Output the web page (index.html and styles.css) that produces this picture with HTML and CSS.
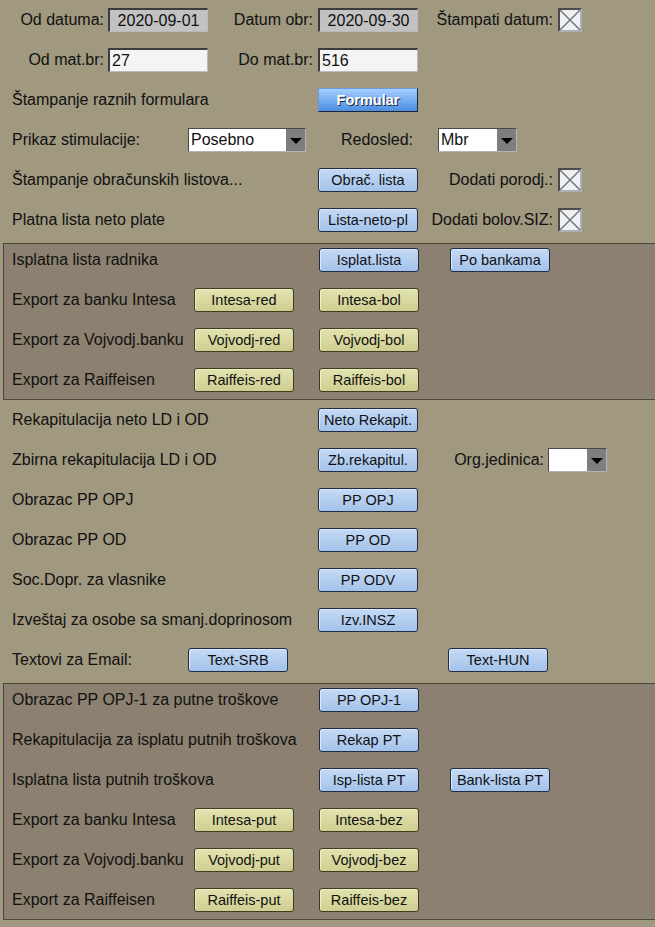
FILE: index.html
```html
<!DOCTYPE html>
<html lang="sr">
<head>
<meta charset="utf-8">
<title>Obračun</title>
<link rel="stylesheet" href="styles.css">
</head>
<body>
<div class="page">
  <div class="row">
    <span class="lbl ra w108">Od datuma:</span>
    <span class="field grey center">2020-09-01</span>
    <span class="lbl ra w110">Datum obr:</span>
    <span class="field grey center">2020-09-30</span>
    <span class="lbl ra w140">Štampati datum:</span>
    <span class="chk"><svg viewBox="0 0 20 20" width="20" height="20"><line x1="0" y1="0" x2="20" y2="20"/><line x1="20" y1="0" x2="0" y2="20"/></svg></span>
  </div>
  <div class="row">
    <span class="lbl ra w108">Od mat.br:</span>
    <span class="field white">27</span>
    <span class="lbl ra w110">Do mat.br:</span>
    <span class="field white">516</span>
  </div>
  <div class="row">
    <span class="lbl w318">Štampanje raznih formulara</span>
    <span class="btn primary">Formular</span>
  </div>
  <div class="row">
    <span class="lbl w188">Prikaz stimulacije:</span>
    <span class="select w118"><span class="val">Posebno</span><span class="arr"></span></span>
    <span class="lbl w132 pl35">Redosled:</span>
    <span class="select w79"><span class="val">Mbr</span><span class="arr"></span></span>
  </div>
  <div class="row">
    <span class="lbl w318">Štampanje obračunskih listova...</span>
    <span class="btn blue">Obrač. lista</span>
    <span class="lbl ra w140">Dodati porodj.:</span>
    <span class="chk"><svg viewBox="0 0 20 20" width="20" height="20"><line x1="0" y1="0" x2="20" y2="20"/><line x1="20" y1="0" x2="0" y2="20"/></svg></span>
  </div>
  <div class="row">
    <span class="lbl w318">Platna lista neto plate</span>
    <span class="btn blue">Lista-neto-pl</span>
    <span class="lbl ra w140">Dodati bolov.SIZ:</span>
    <span class="chk"><svg viewBox="0 0 20 20" width="20" height="20"><line x1="0" y1="0" x2="20" y2="20"/><line x1="20" y1="0" x2="0" y2="20"/></svg></span>
  </div>

  <div class="section">
    <div class="rows">
      <div class="row">
        <span class="lbl s w315">Isplatna lista radnika</span>
        <span class="btn blue">Isplat.lista</span>
        <span class="gap31"></span>
        <span class="btn blue">Po bankama</span>
      </div>
      <div class="row">
        <span class="lbl s w190">Export za banku Intesa</span>
        <span class="btn yellow">Intesa-red</span>
        <span class="gap25"></span>
        <span class="btn yellow">Intesa-bol</span>
      </div>
      <div class="row">
        <span class="lbl s w190">Export za Vojvodj.banku</span>
        <span class="btn yellow">Vojvodj-red</span>
        <span class="gap25"></span>
        <span class="btn yellow">Vojvodj-bol</span>
      </div>
      <div class="row">
        <span class="lbl s w190">Export za Raiffeisen</span>
        <span class="btn yellow">Raiffeis-red</span>
        <span class="gap25"></span>
        <span class="btn yellow">Raiffeis-bol</span>
      </div>
    </div>
  </div>

  <div class="row">
    <span class="lbl w318">Rekapitulacija neto LD i OD</span>
    <span class="btn blue">Neto Rekapit.</span>
  </div>
  <div class="row">
    <span class="lbl w318">Zbirna rekapitulacija LD i OD</span>
    <span class="btn blue">Zb.rekapitul.</span>
    <span class="lbl ra w130">Org.jedinica:</span>
    <span class="select w59"><span class="val"></span><span class="arr"></span></span>
  </div>
  <div class="row">
    <span class="lbl w318">Obrazac PP OPJ</span>
    <span class="btn blue">PP OPJ</span>
  </div>
  <div class="row">
    <span class="lbl w318">Obrazac PP OD</span>
    <span class="btn blue">PP OD</span>
  </div>
  <div class="row">
    <span class="lbl w318">Soc.Dopr. za vlasnike</span>
    <span class="btn blue">PP ODV</span>
  </div>
  <div class="row">
    <span class="lbl w318">Izveštaj za osobe sa smanj.doprinosom</span>
    <span class="btn blue">Izv.INSZ</span>
  </div>
  <div class="row">
    <span class="lbl w188">Textovi za Email:</span>
    <span class="btn blue">Text-SRB</span>
    <span class="gap160"></span>
    <span class="btn blue">Text-HUN</span>
  </div>

  <div class="section">
    <div class="rows">
      <div class="row">
        <span class="lbl s w315">Obrazac PP OPJ-1 za putne troškove</span>
        <span class="btn blue">PP OPJ-1</span>
      </div>
      <div class="row">
        <span class="lbl s w315">Rekapitulacija za isplatu putnih troškova</span>
        <span class="btn blue">Rekap PT</span>
      </div>
      <div class="row">
        <span class="lbl s w315">Isplatna lista putnih troškova</span>
        <span class="btn blue">Isp-lista PT</span>
        <span class="gap31"></span>
        <span class="btn blue">Bank-lista PT</span>
      </div>
      <div class="row">
        <span class="lbl s w190">Export za banku Intesa</span>
        <span class="btn yellow">Intesa-put</span>
        <span class="gap25"></span>
        <span class="btn yellow">Intesa-bez</span>
      </div>
      <div class="row">
        <span class="lbl s w190">Export za Vojvodj.banku</span>
        <span class="btn yellow">Vojvodj-put</span>
        <span class="gap25"></span>
        <span class="btn yellow">Vojvodj-bez</span>
      </div>
      <div class="row">
        <span class="lbl s w190">Export za Raiffeisen</span>
        <span class="btn yellow">Raiffeis-put</span>
        <span class="gap25"></span>
        <span class="btn yellow">Raiffeis-bez</span>
      </div>
    </div>
  </div>
</div>
</body>
</html>
```

FILE: styles.css
```css
html, body {
  margin: 0;
  padding: 0;
  overflow: hidden;
}
body {
  background: #a0987f;
  font-family: "Liberation Sans", Arial, sans-serif;
  font-size: 16px;
  color: #111;
}
.page {
  width: 655px;
}
.row {
  display: flex;
  align-items: center;
  height: 40px;
}
.lbl {
  box-sizing: border-box;
  flex: none;
  white-space: nowrap;
  padding-left: 12px;
}
.lbl.s { padding-left: 8px; }
.lbl.ra {
  text-align: right;
  padding-left: 0;
  padding-right: 5px;
}
.w108 { width: 108px; }
.w108.ra { padding-right: 4px; }
.w110 { width: 110px; }
.w130 { width: 130px; }
.w130.ra { padding-right: 4px; }
.w132 { width: 132px; }
.w140 { width: 140px; }
.w188 { width: 188px; }
.w190 { width: 190px; }
.w315 { width: 315px; }
.w318 { width: 318px; }
.pl35 { padding-left: 35px; }
.gap25 { width: 25px; flex: none; }
.gap31 { width: 31px; flex: none; }
.gap160 { width: 160px; flex: none; }

.field {
  box-sizing: border-box;
  width: 100px;
  height: 24px;
  flex: none;
  border-style: solid;
  border-width: 2px 1px 1px 2px;
  border-color: #3c3c3c #b8bcc0 #b8bcc0 #3c3c3c;
  padding: 0 2px;
  line-height: 21px;
  font-size: 16px;
}
.field.grey { background: #c2c2c2; }
.field.white { background: #f4f4f4; }
.field.center { text-align: center; }

.chk {
  box-sizing: border-box;
  width: 24px;
  height: 24px;
  flex: none;
  border-style: solid;
  border-width: 2px;
  border-color: #4a4a4a #a8b0b4 #a8b0b4 #4a4a4a;
  background: #eef0f2;
  display: flex;
}
.chk svg line {
  stroke: #6c7074;
  stroke-width: 1.3;
}

.select {
  box-sizing: border-box;
  height: 24px;
  flex: none;
  display: flex;
  background: #fff;
  border-style: solid;
  border-width: 1px;
  border-color: #4a4a4a #b4b4b4 #b4b4b4 #4a4a4a;
}
.w118 { width: 118px; }
.w79 { width: 79px; }
.w59 { width: 59px; }
.select .val {
  flex: 1;
  padding-left: 2px;
  line-height: 22px;
  font-size: 16px;
}
.select .arr {
  width: 19px;
  flex: none;
  background: #7e7e7e;
  display: flex;
  align-items: center;
  justify-content: center;
}
.select .arr::after {
  content: "";
  width: 0;
  height: 0;
  border-left: 6px solid transparent;
  border-right: 6px solid transparent;
  border-top: 6px solid #000;
  margin-top: 2px;
}

.btn {
  box-sizing: border-box;
  width: 100px;
  height: 24px;
  flex: none;
  display: flex;
  align-items: center;
  justify-content: center;
  font-size: 14.5px;
  color: #111;
  border: 1px solid #1e2c44;
  border-radius: 3px;
  white-space: nowrap;
}
.btn.blue {
  background: linear-gradient(#c4daf6, #a4c2ea);
  box-shadow: inset 1px 1px 0 #dce8fa;
}
.btn.yellow {
  background: linear-gradient(#e2e2ae, #cfcf92);
  border-color: #3e3e1c;
  box-shadow: inset 1px 1px 0 #eeeec4;
}
.btn.primary {
  border-radius: 0;
  background: linear-gradient(#a4ceff, #4c8ee0);
  border-color: #6c9ad8 #18243c #18243c #6c9ad8;
  color: #fff;
  font-weight: bold;
  text-shadow: 1px 1px 0 #1c2840;
}

.section {
  margin: 3px 0 0 3px;
  border: 1px solid #4a4840;
  border-right: none;
  background: #8c8170;
}
.section .rows {
  margin-top: -4px;
  margin-bottom: -1px;
}
```
